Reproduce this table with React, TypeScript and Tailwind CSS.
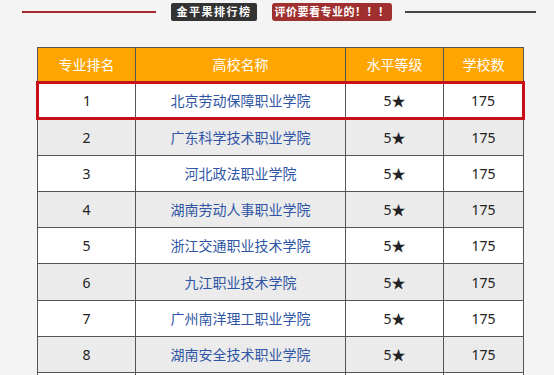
const rows = [
	{ rank: 1, name: "北京劳动保障职业学院" },
	{ rank: 2, name: "广东科学技术职业学院" },
	{ rank: 3, name: "河北政法职业学院" },
	{ rank: 4, name: "湖南劳动人事职业学院" },
	{ rank: 5, name: "浙江交通职业技术学院" },
	{ rank: 6, name: "九江职业技术学院" },
	{ rank: 7, name: "广州南洋理工职业学院" },
	{ rank: 8, name: "湖南安全技术职业学院" },
];

export default function App() {
	return (
		<div
			className="w-[554px] h-[375px] overflow-hidden bg-[#f4f4f4]"
			style={{ fontFamily: '"Noto Sans", "Noto Sans CJK SC", sans-serif' }}
		>
			{/* Title bar */}
			<div className="flex items-start pl-[22px] pt-[3px] h-[47px]">
				<div className="w-[134px] h-[2px] bg-[#a3292b] mt-[8px]" />
				<div className="ml-[15px] w-[86px] h-[18px] rounded-[2px] bg-[#333333] text-white text-[11px] font-bold leading-[18px] text-center tracking-[1.5px]">
					金平果排行榜
				</div>
				<div className="ml-[15px] w-[120px] h-[18px] rounded-[3px] bg-[#a02f2f] text-white text-[11px] font-bold leading-[18px] text-center tracking-[0.5px]">
					评价要看专业的！！！
				</div>
				<div className="ml-[13px] w-[131px] h-[2px] bg-[#444444] mt-[8px]" />
			</div>

			{/* Ranking table */}
			<table className="ml-[36px] w-[486px] border-collapse table-fixed text-[14px]">
				<colgroup>
					<col className="w-[98px]" />
					<col className="w-[210px]" />
					<col className="w-[98px]" />
					<col className="w-[80px]" />
				</colgroup>
				<thead>
					<tr className="h-[35px] bg-[#ffa500] text-white">
						<th className="border border-[#555] font-normal">专业排名</th>
						<th className="border border-[#555] font-normal">高校名称</th>
						<th className="border border-[#555] font-normal">水平等级</th>
						<th className="border border-[#555] font-normal">学校数</th>
					</tr>
				</thead>
				<tbody>
					{rows.map((r) => {
						const hl = r.rank === 1;
						const cell = hl
							? "border-y-[3px] border-y-[#c8101a] border-x border-x-[#555]"
							: "border border-[#555]";
						return (
							<tr
								key={r.rank}
								className={`h-[36.3px] text-center ${r.rank % 2 === 0 ? "bg-[#ebebeb]" : "bg-white"}`}
							>
								<td
									className={`${cell} text-[#222] ${hl ? "border-l-[3px] border-l-[#c8101a]" : ""}`}
								>
									{r.rank}
								</td>
								<td className={`${cell} text-[#2f55a5]`}>{r.name}</td>
								<td className={`${cell} text-[#222]`}>5★</td>
								<td
									className={`${cell} text-[#222] ${hl ? "border-r-[3px] border-r-[#c8101a]" : ""}`}
								>
									175
								</td>
							</tr>
						);
					})}
					{/* next row, scrolled below the fold */}
					<tr className="h-[36px] bg-white">
						<td className="border border-[#555]" />
						<td className="border border-[#555]" />
						<td className="border border-[#555]" />
						<td className="border border-[#555]" />
					</tr>
				</tbody>
			</table>
		</div>
	);
}
